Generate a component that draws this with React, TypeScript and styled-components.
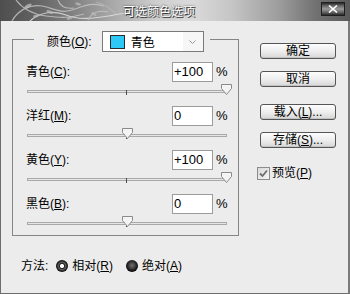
import React from "react";
import styled, { createGlobalStyle } from "styled-components";

const Global = createGlobalStyle`
  html, body { margin: 0; padding: 0; background: #ececec; }
  body {
    font-family: "Liberation Sans", "Noto Sans CJK SC", sans-serif;
    font-size: 12px;
    color: #000;
  }
  * { box-sizing: border-box; }
`;

const Window = styled.div`
  width: 350px;
  height: 294px;
  display: flex;
  flex-direction: column;
  background: #ececec;
  overflow: hidden;
`;

const TitleBar = styled.div`
  position: relative;
  flex: none;
  height: 21px;
  display: flex;
  align-items: center;
  padding-left: 123px;
  padding-right: 5px;
  background: linear-gradient(
    90deg,
    #4e4e4e 0%,
    #5e5e5e 8%,
    #7e7e7e 20%,
    #a8a8a8 32%,
    #cfcfcf 45%,
    #dadada 55%,
    #c6c6c6 66%,
    #9c9c9c 80%,
    #727272 90%,
    #5a5a5a 100%
  );
`;

const Ornament = styled.svg`
  position: absolute;
  left: 0;
  top: 0;
`;

const TitleText = styled.span`
  position: relative;
  font-family: "Noto Sans CJK SC", sans-serif;
  font-size: 12px;
  line-height: 14px;
  color: #fff;
  letter-spacing: 0;
  text-shadow: 1px 1px 0 #3a3a3a, 0 0 2px #333;
`;

const CloseButton = styled.div`
  margin-left: auto;
  margin-top: -3px;
  width: 24px;
  height: 14px;
  border: 1px solid #1e1e1e;
  background: linear-gradient(
    180deg,
    #2a2a2a 0%,
    #6a6a6a 25%,
    #9a9a9a 50%,
    #6a6a6a 75%,
    #2a2a2a 100%
  );
  display: flex;
  align-items: center;
  justify-content: center;
`;

const Body = styled.div`
  flex: 1;
  border-left: 1px solid #6e6e6e;
  border-right: 2px solid #7a7a7a;
  border-bottom: 1px solid #6e6e6e;
  padding: 6px 0 0 11px;
  display: grid;
  grid-template-columns: 227px 76px;
  column-gap: 21px;
  align-content: start;
`;

const Group = styled.fieldset`
  margin: 0;
  padding: 10px 11px 9px 13px;
  border: 1px solid #858585;
  min-inline-size: 0;
  width: 227px;
`;

const Legend = styled.legend`
  margin-left: 8px;
  padding: 4px 6px 0 13px;
`;

const LegendInner = styled.div`
  display: flex;
  align-items: center;
  gap: 10px;
`;

const Label = styled.span`
  font-size: 12px;
  line-height: 14px;
  white-space: nowrap;
`;

const Mn = styled.span`
  text-decoration: underline;
  text-underline-offset: 1px;
`;

const Dropdown = styled.div`
  width: 102px;
  height: 21px;
  border: 1px solid #7a7a7a;
  background: #fff;
  display: flex;
  align-items: center;
  padding-left: 7px;
`;

const Swatch = styled.span<{ $color: string }>`
  width: 15px;
  height: 14px;
  border: 1px solid #2a2a2a;
  background: ${(p) => p.$color};
  flex: none;
`;

const DropText = styled.span`
  margin-left: 6px;
  font-family: "Noto Sans CJK SC", sans-serif;
  font-size: 12px;
  flex: 1;
`;

const DropArrow = styled.span`
  width: 20px;
  height: 19px;
  background: #f6f6f6;
  display: flex;
  align-items: center;
  justify-content: center;
`;

const Rows = styled.div`
  display: flex;
  flex-direction: column;
  gap: 12px;
`;

const Row = styled.div`
  display: flex;
  flex-direction: column;
`;

const RowHead = styled.div`
  height: 20px;
  display: flex;
  align-items: center;
`;

const RowLabel = styled(Label)`
  flex: 1;
`;

const NumInput = styled.div`
  width: 41px;
  height: 20px;
  border: 1px solid #9c9c9c;
  background: #fff;
  font-size: 13px;
  line-height: 18px;
  padding-left: 1px;
`;

const Percent = styled.span`
  width: 14px;
  padding-left: 3px;
  font-size: 13px;
  line-height: 16px;
`;

const Slider = styled.div`
  position: relative;
  height: 12px;
  width: 200px;
  margin-left: 1px;
`;

const Track = styled.div`
  position: absolute;
  left: 0;
  right: 0;
  top: 8px;
  height: 3px;
  border: 1px solid #a9a9a9;
  background: #e6e6e6;
`;

const Tick = styled.div`
  position: absolute;
  left: 99px;
  top: 8px;
  width: 1px;
  height: 5px;
  background: #4a4a4a;
`;

const Thumb = styled.svg`
  position: absolute;
  top: 2px;
`;

const Side = styled.div`
  display: flex;
  flex-direction: column;
  padding-top: 16px;
`;

const Button = styled.div<{ $gapTop?: number }>`
  height: 16px;
  margin-top: ${(p) => p.$gapTop ?? 0}px;
  border: 1px solid #555;
  border-radius: 3px;
  background: linear-gradient(180deg, #fdfdfd 0%, #ececec 55%, #d6d6d6 100%);
  box-shadow: inset 0 -1px 0 #c4c4c4;
  display: flex;
  align-items: center;
  justify-content: center;
  font-size: 12px;
  line-height: 14px;
`;

const CheckRow = styled.div`
  margin-top: 18px;
  margin-left: -3px;
  display: flex;
  align-items: center;
  gap: 2px;
`;

const CheckBox = styled.span`
  width: 13px;
  height: 13px;
  border: 1px solid #8c8c8c;
  background: linear-gradient(135deg, #d8d8d8 0%, #f6f6f6 100%);
  display: flex;
  align-items: center;
  justify-content: center;
`;

const MethodRow = styled.div`
  grid-column: 1 / -1;
  margin-top: 23px;
  padding-left: 9px;
  height: 14px;
  display: flex;
  align-items: center;
`;

const Radio = styled.span<{ $on?: boolean }>`
  width: 12px;
  height: 12px;
  border-radius: 50%;
  margin: 0 4px 0 ${(p) => (p.$on ? 8 : 13)}px;
  background: ${(p) =>
    p.$on
      ? "radial-gradient(circle, #ffffff 0 1.7px, #1a1a1a 2.4px, #5e5e5e 3.6px, #2a2a2a 4.8px, #050505 6px)"
      : "radial-gradient(circle at 50% 45%, #6e6e6e 0, #4a4a4a 2.5px, #262626 4.5px, #0a0a0a 6px)"};
`;

type RowData = { name: string; key: string; value: number; text: string };

const rows: RowData[] = [
  { name: "青色", key: "C", value: 100, text: "+100" },
  { name: "洋红", key: "M", value: 0, text: "0" },
  { name: "黄色", key: "Y", value: 100, text: "+100" },
  { name: "黑色", key: "B", value: 0, text: "0" },
];

const ThumbIcon: React.FC<{ left: number }> = ({ left }) => (
  <Thumb width="11" height="11" viewBox="0 0 11 11" style={{ left }}>
    <path d="M0.5 0.5 H10.5 V4.5 L5.5 10.5 L0.5 4.5 Z" fill="#f4f4f4" stroke="#8a8a8a" strokeWidth="1" />
  </Thumb>
);

export default function App() {
  return (
    <>
      <Global />
      <Window>
        <TitleBar>
          <Ornament width="135" height="21" viewBox="0 0 135 21">
            <g fill="none" stroke="#c8c8c8" strokeWidth="1.2" opacity="0.8">
              <path d="M12 21 C 18 10, 30 4, 42 6 S 60 14, 72 10 S 92 2, 104 6" />
              <path d="M16 0 C 22 8, 30 14, 46 16 S 70 18, 84 14" />
              <path d="M30 21 C 40 12, 54 10, 66 15 S 90 20, 130 12" stroke="#e4e4e4" />
              <path d="M58 0 C 60 6, 66 9, 74 8" />
              <path d="M88 20 C 92 12, 100 10, 108 12" />
              <path d="M96 2 C 104 4, 110 8, 116 14" stroke="#b8b8b8" />
            </g>
            <g fill="#bdbdbd" opacity="0.75">
              <ellipse cx="28" cy="6" rx="4" ry="1.6" transform="rotate(-30 28 6)" />
              <ellipse cx="50" cy="12" rx="3.5" ry="1.4" transform="rotate(20 50 12)" />
              <ellipse cx="36" cy="16" rx="3" ry="1.3" transform="rotate(-10 36 16)" />
              <ellipse cx="78" cy="4" rx="3" ry="1.2" transform="rotate(15 78 4)" />
              <ellipse cx="70" cy="18" rx="3.5" ry="1.3" transform="rotate(-20 70 18)" />
              <ellipse cx="94" cy="14" rx="3" ry="1.2" transform="rotate(30 94 14)" />
            </g>
          </Ornament>
          <TitleText>可选颜色选项</TitleText>
          <CloseButton>
            <svg width="10" height="8" viewBox="0 0 10 8">
              <path d="M1 0.5 L9 7.5 M9 0.5 L1 7.5" stroke="#fff" strokeWidth="1.6" />
            </svg>
          </CloseButton>
        </TitleBar>
        <Body>
          <Group>
            <Legend>
              <LegendInner>
                <Label>
                  颜色(<Mn>O</Mn>):
                </Label>
                <Dropdown>
                  <Swatch $color="#2ec8f7" />
                  <DropText>青色</DropText>
                  <DropArrow>
                    <svg width="7" height="4" viewBox="0 0 7 4">
                      <path d="M0.5 0.5 L3.5 3.5 L6.5 0.5" fill="none" stroke="#9a9a9a" strokeWidth="1" />
                    </svg>
                  </DropArrow>
                </Dropdown>
              </LegendInner>
            </Legend>
            <Rows>
              {rows.map((r) => (
                <Row key={r.key}>
                  <RowHead>
                    <RowLabel>
                      {r.name}(<Mn>{r.key}</Mn>):
                    </RowLabel>
                    <NumInput>{r.text}</NumInput>
                    <Percent>%</Percent>
                  </RowHead>
                  <Slider>
                    <Track />
                    <Tick />
                    <ThumbIcon left={((r.value + 100) / 200) * 199 - 5} />
                  </Slider>
                </Row>
              ))}
            </Rows>
          </Group>
          <Side>
            <Button>确定</Button>
            <Button $gapTop={12}>取消</Button>
            <Button $gapTop={17}>
              载入(<Mn>L</Mn>)...
            </Button>
            <Button $gapTop={12}>
              存储(<Mn>S</Mn>)...
            </Button>
            <CheckRow>
              <CheckBox>
                <svg width="9" height="9" viewBox="0 0 9 9">
                  <path d="M1 4.5 L3.5 7 L8 1.5" fill="none" stroke="#6e6e6e" strokeWidth="1.8" />
                </svg>
              </CheckBox>
              <Label>
                预览(<Mn>P</Mn>)
              </Label>
            </CheckRow>
          </Side>
          <MethodRow>
            <Label>方法:</Label>
            <Radio $on />
            <Label>
              相对(<Mn>R</Mn>)
            </Label>
            <Radio />
            <Label>
              绝对(<Mn>A</Mn>)
            </Label>
          </MethodRow>
        </Body>
      </Window>
    </>
  );
}
